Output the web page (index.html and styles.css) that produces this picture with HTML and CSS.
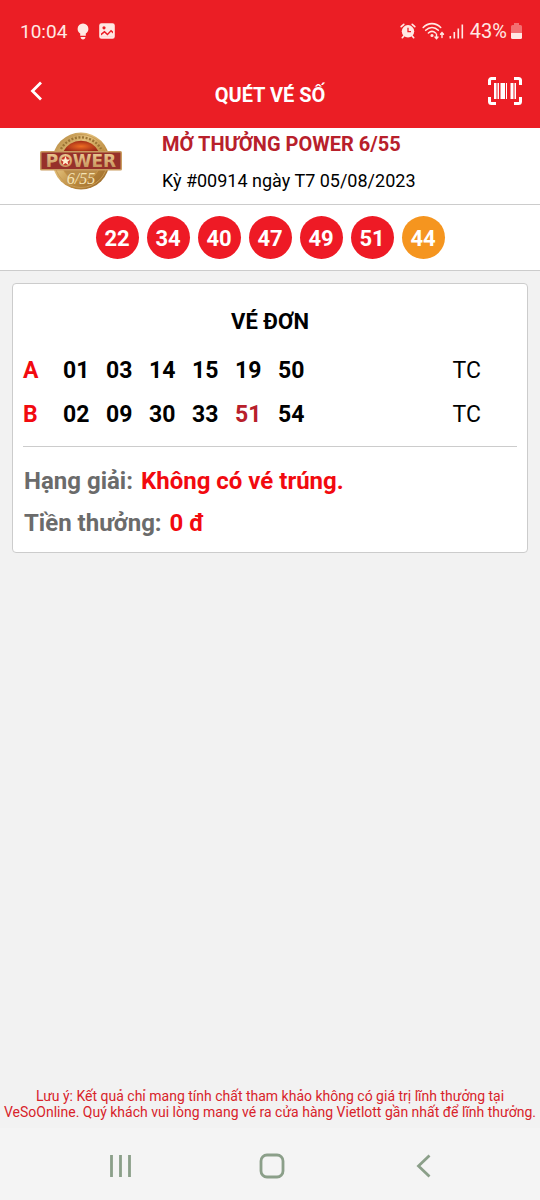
FILE: index.html
```html
<!DOCTYPE html>
<html lang="vi">
<head>
<meta charset="utf-8">
<meta name="viewport" content="width=device-width, initial-scale=1">
<title>Quét vé số</title>
<link rel="stylesheet" href="styles.css">
</head>
<body>
<div class="screen">
  <div class="status">
    <span class="clock">10:04</span>
    <svg class="bulb" width="12" height="17" viewBox="0 0 12 17" fill="currentColor" aria-hidden="true"><path d="M6 .5a5.3 5.3 0 0 0-5.4 5.4c0 2.200 1.200 3.500 2.600 4.700v2.200h5.600v-2.200c1.400-1.200 2.600-2.500 2.600-4.700A5.300 5.300 0 0 0 6 .5zM3.600 14h4.800c0 1.500-1 2.500-2.400 2.500S3.600 15.500 3.600 14z"/></svg>
    <svg width="16" height="16" viewBox="0 0 16 16" aria-hidden="true"><rect x="1" y="1" width="14" height="14" rx="1.500" fill="currentColor" stroke="currentColor" stroke-width="1.600"/><circle cx="5" cy="4.800" r="1.600" fill="#eb1e25"/><path d="M2 13.200V10.500l3.500-2.700 3 2.700L12 6.800l2 1.700v4.700z" fill="#eb1e25"/><path d="M2 13.800v-1.300l3.500-2.700 3 2.700L12 8.800l2 1.700v3.300z" fill="currentColor"/></svg>
    <span class="spacer"></span>
    <svg width="16" height="16" viewBox="0 0 16 16" aria-hidden="true"><g fill="none" stroke="currentColor" stroke-width="1.700" stroke-linecap="round"><path d="M1.200 3.600 3.800 1.300M14.800 3.600 12.200 1.300M3.800 13 2.300 14.700M12.200 13l1.500 1.700"/></g><circle cx="8" cy="8.300" r="6.200" fill="currentColor"/><path d="M8 4.800v3.900h3" fill="none" stroke="#eb1e25" stroke-width="1.300"/></svg>
    <svg class="wifi" width="23" height="18" viewBox="0 0 23 18" fill="none" stroke="currentColor" stroke-width="1.600" stroke-linecap="round" aria-hidden="true"><path d="M1.200 5.500c5-5.200 12.500-5.200 17.500 0M3.700 8.300c3.700-3.700 8.900-3.700 12.600 0M6.400 11c2.200-2 5-2 7.200 0"/><circle cx="10" cy="13.500" r=".8" fill="currentColor"/><path d="M14.500 12v4.500M13 15l1.500 1.700L16 15M20 15.500V11M18.500 12.300l1.500-1.700 1.500 1.700" stroke-width="1.400"/></svg>
    <svg width="15" height="15" viewBox="0 0 15 15" fill="currentColor" aria-hidden="true"><rect x=".5" y="12" width="1.600" height="2.500"/><rect x="4.500" y="8" width="1.600" height="6.500"/><rect x="8.500" y="4.500" width="1.600" height="10"/><rect x="12.500" y=".5" width="1.600" height="14"/></svg>
    <span class="percent">43%</span>
    <svg width="11" height="16" viewBox="0 0 11 16" fill="currentColor" aria-hidden="true"><path d="M3 0h5v2h1.500A1.500 1.500 0 0 1 11 3.500V10H0V3.500A1.500 1.500 0 0 1 1.500 2H3z" opacity=".4"/><path d="M0 10h11v4.500a1.500 1.500 0 0 1-1.500 1.500h-8A1.500 1.500 0 0 1 0 14.500z"/></svg>
  </div>

  <header class="appbar">
    <button class="icon-btn" type="button" aria-label="Quay lại"><svg width="12" height="20" viewBox="0 0 12 20" fill="none" stroke="currentColor" stroke-width="2.800"><path d="M11 1.500 2.500 10l8.500 8.500"/></svg></button>
    <h1 class="title">QUÉT VÉ SỐ</h1>
    <button class="icon-btn scan" type="button" aria-label="Quét mã vạch"><svg width="34" height="28" viewBox="0 0 34 28"><path d="M1.500 8V3.500a2 2 0 0 1 2-2H8M26 1.500h4.500a2 2 0 0 1 2 2V8M32.500 20v4.500a2 2 0 0 1-2 2H26M8 26.500H3.500a2 2 0 0 1-2-2V20" fill="none" stroke="currentColor" stroke-width="3"/><path fill="currentColor" d="M6 6h2.500v16H6zM9.500 6h1.500v16H9.500zM12.500 6h4.500v16h-4.500zM18 6h1v16h-1zM22.500 6h3v16h-3zM26.500 6h1.500v16h-1.500z"/></svg></button>
  </header>

  <main class="content">
    <section class="draw">
      <div class="logo">
        <svg width="82" height="60" viewBox="0 0 82 60" role="img" aria-label="Power 6/55">
          <defs>
            <linearGradient id="gold" x1="0" y1="0" x2="1" y2="1"><stop offset="0" stop-color="#a87830"/><stop offset=".35" stop-color="#e3c17c"/><stop offset=".65" stop-color="#b9873b"/><stop offset="1" stop-color="#94642a"/></linearGradient>
            <radialGradient id="glow"><stop offset="0" stop-color="#ee6d22"/><stop offset="1" stop-color="#a02a18"/></radialGradient>
            <linearGradient id="letters" x1="0" y1="0" x2="0" y2="1"><stop offset="0" stop-color="#f0d09a"/><stop offset="1" stop-color="#c08a50"/></linearGradient>
          </defs>
          <circle cx="41" cy="29" r="28.500" fill="url(#gold)"/>
          <circle cx="41" cy="29" r="26.500" fill="none" stroke="#c99c55" stroke-width="1"/>
          <path d="M21 17a23 23 0 0 1 40 0" fill="none" stroke="#9b7334" stroke-width="2.400" stroke-dasharray="2 1.600"/>
          <circle cx="41" cy="29" r="20" fill="#c89548"/>
          <path d="M23 20a20 20 0 0 1 36 0z" fill="url(#glow)"/>
          <path d="M24 38h34a19 19 0 0 1-34 0z" fill="#b98c49"/>
          <rect x="0" y="19" width="82" height="19.500" rx="1.500" fill="#c99c60"/>
          <rect x="1.500" y="20.500" width="79" height="16.500" fill="#96312a"/>
          <text class="logo-word" x="41" y="35" text-anchor="middle" fill="url(#letters)">POWER</text>
          <circle cx="25.500" cy="29" r="4.500" fill="#c7362a"/>
          <path d="m25.500 24 1.300 3.500h3.600l-2.900 2.200 1.100 3.500-3.100-2.100-3.100 2.100 1.100-3.500-2.900-2.200h3.600z" fill="#fff0d0"/>
          <text class="logo-six" x="41" y="52" text-anchor="middle">6/55</text>
        </svg>
      </div>
      <div class="draw-info">
        <h2 class="draw-title">MỞ THƯỞNG POWER 6/55</h2>
        <p class="draw-date">Kỳ #00914 ngày T7 05/08/2023</p>
      </div>
    </section>

    <section class="balls">
      <span class="ball">22</span><span class="ball">34</span><span class="ball">40</span><span class="ball">47</span><span class="ball">49</span><span class="ball">51</span><span class="ball bonus">44</span>
    </section>

    <section class="ticket">
      <h2 class="ticket-title">VÉ ĐƠN</h2>
      <table class="lines">
        <tbody>
          <tr><th scope="row">A</th><td>01</td><td>03</td><td>14</td><td>15</td><td>19</td><td>50</td><td class="kind">TC</td></tr>
          <tr><th scope="row">B</th><td>02</td><td>09</td><td>30</td><td>33</td><td class="hit">51</td><td>54</td><td class="kind">TC</td></tr>
        </tbody>
      </table>
      <dl class="result">
        <div class="result-row"><dt>Hạng giải:</dt><dd>Không có vé trúng.</dd></div>
        <div class="result-row"><dt>Tiền thưởng:</dt><dd>0 đ</dd></div>
      </dl>
    </section>

    <p class="note">Lưu ý: Kết quả chỉ mang tính chất tham khảo không có giá trị lĩnh thưởng tại VeSoOnline. Quý khách vui lòng mang vé ra cửa hàng Vietlott gần nhất để lĩnh thưởng.</p>
  </main>

  <nav class="navbar">
    <button type="button" aria-label="Gần đây"><svg width="24" height="24" viewBox="0 0 24 24" fill="none" stroke="currentColor" stroke-width="2.800"><path d="M3.500 1v22M12.500 1v22M21.500 1v22"/></svg></button>
    <button type="button" aria-label="Trang chính"><svg width="26" height="26" viewBox="0 0 26 26" fill="none" stroke="currentColor" stroke-width="2.800"><rect x="2" y="2" width="22" height="22" rx="6"/></svg></button>
    <button type="button" aria-label="Trở về"><svg width="24" height="24" viewBox="0 0 24 24" fill="none" stroke="currentColor" stroke-width="2.800"><path d="M17.500 1.500 6.500 12l11 10.500"/></svg></button>
  </nav>
</div>
</body>
</html>
```

FILE: styles.css
```css
* { box-sizing: border-box; }

body {
  margin: 0;
  font-family: Roboto, "Noto Sans", sans-serif;
  background: #f2f2f2;
  color: #000;
}

h1, h2, p, dl, dd { margin: 0; }

button {
  padding: 0;
  border: 0;
  background: none;
  color: inherit;
}

svg { display: block; }

.screen {
  min-height: 100vh;
  display: flex;
  flex-direction: column;
}

.status {
  display: flex;
  align-items: center;
  height: 62px;
  padding: 0 18px 0 20px;
  background: #eb1e25;
  color: #ffe9e4;
  font-size: 20px;
}

.clock { margin-right: 8px; font-size: 19px; }
.bulb { margin: 0 10px 0 2px; }
.spacer { flex: 1; }
.wifi { margin: 0 4px 0 6px; }
.percent { margin: 0 4px 0 6px; }

.appbar {
  display: grid;
  grid-template-columns: 72px 1fr 72px;
  align-items: center;
  height: 66px;
  padding-bottom: 9px;
  background: #eb1e25;
  color: #fff;
}

.icon-btn { display: flex; justify-content: center; }
.scan { padding-left: 2px; }

.title {
  padding-top: 8px;
  font-size: 20px;
  line-height: 24px;
  font-weight: 700;
  text-align: center;
}

.content {
  flex: 1;
  display: flex;
  flex-direction: column;
}

.draw {
  display: grid;
  grid-template-columns: 30% 1fr;
  height: 77px;
  background: #fff;
  border-bottom: 1px solid #ccc;
}

.logo {
  display: flex;
  justify-content: center;
  padding-top: 4px;
}

.logo-word { font: 700 17px "DejaVu Sans", sans-serif; }

.logo-six {
  font: italic 16px "Liberation Serif", serif;
  fill: #f5e3b5;
}

.draw-title {
  padding-top: 4px;
  font-size: 20px;
  line-height: 24px;
  font-weight: 700;
  color: #b8202b;
}

.draw-date {
  padding-top: 13px;
  font-size: 18px;
  line-height: 24px;
}

.balls {
  display: flex;
  justify-content: center;
  align-items: center;
  gap: 8px;
  height: 66px;
  background: #fff;
  border-bottom: 1px solid #ccc;
}

.ball {
  display: grid;
  place-items: center;
  width: 43px;
  height: 43px;
  padding-top: 2px;
  border-radius: 50%;
  background: #ee1a25;
  color: #fff;
  font-size: 22px;
  font-weight: 700;
}

.bonus { background: #f5951f; }

.ticket {
  margin: 12px 12px 0;
  padding: 24px 10px 8px;
  background: #fff;
  border: 1px solid #ccc;
  border-radius: 4px;
}

.ticket-title {
  font-size: 22px;
  line-height: 28px;
  font-weight: 700;
  text-align: center;
}

.lines {
  width: 100%;
  margin-top: 12px;
  border-collapse: collapse;
  table-layout: fixed;
  font-size: 23px;
}

.lines th,
.lines td {
  width: 43px;
  height: 44px;
  padding: 0;
  font-weight: 700;
  text-align: left;
}

.lines th {
  width: 40px;
  color: #f20a0f;
}

.lines .hit { color: #b8202b; }

.lines .kind {
  width: auto;
  padding-right: 36px;
  font-weight: 400;
  text-align: right;
}

.result {
  margin-top: 10px;
  padding: 13px 0 0 1px;
  border-top: 1px solid #ccc;
  font-size: 24px;
  line-height: 42px;
  font-weight: 700;
}

.result-row { display: flex; gap: 8px; }
.result-row dt { color: #6b6b6b; }
.result-row dd { color: #f20a0f; }

.note {
  margin-top: auto;
  padding-bottom: 8px;
  font-size: 14px;
  line-height: 16px;
  text-align: center;
  color: #d8232a;
}

.navbar {
  display: flex;
  justify-content: space-between;
  align-items: center;
  height: 72px;
  padding: 4px 104px 0 108px;
  background: #f4f4f4;
  color: #8b9f89;
}
```
